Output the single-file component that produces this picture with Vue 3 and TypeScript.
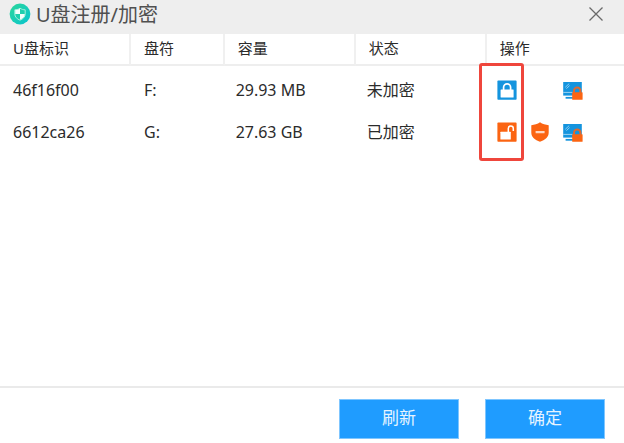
<script setup lang="ts">
import { ref } from 'vue'

interface Drive {
  id: string
  letter: string
  capacity: string
  encrypted: boolean
}

const columns: string[] = ['U盘标识', '盘符', '容量', '状态', '操作']
const drives = ref<Drive[]>([
  { id: '46f16f00', letter: 'F:', capacity: '29.93 MB', encrypted: false },
  { id: '6612ca26', letter: 'G:', capacity: '27.63 GB', encrypted: true },
])
</script>

<template>
  <main class="window">
    <header class="titlebar">
      <svg class="logo" viewBox="0 0 22 22" aria-hidden="true">
        <defs>
          <linearGradient id="logo-fill" x1="0" y1="0" x2="1" y2="1">
            <stop offset="0" stop-color="#2cd79a" />
            <stop offset="1" stop-color="#08c4d0" />
          </linearGradient>
        </defs>
        <circle cx="11" cy="11" r="10.4" fill="url(#logo-fill)" />
        <path d="M11 5.2 C12.6 6.3 14.3 6.8 16.2 6.8 V11 C16.2 13.9 14 16 11 17.2 C8 16 5.8 13.9 5.8 11 V6.8 C7.7 6.8 9.4 6.3 11 5.2 Z" fill="#1fcfae" stroke="#a5f0dd" stroke-width="1" />
        <path d="M11 5.6 V11 H6.2 V7.1 C8 7 9.6 6.6 11 5.6 Z M11 11 H15.8 C15.8 13.7 13.8 15.6 11 16.8 Z" fill="#f4fffc" />
      </svg>
      <h1 class="title">U盘注册/加密</h1>
      <button class="close" type="button" aria-label="关闭">
        <svg viewBox="0 0 14 14" aria-hidden="true">
          <path d="M0.5 0.5 L13.5 13.5 M13.5 0.5 L0.5 13.5" fill="none" stroke="#6a6a6a" stroke-width="1.3" />
        </svg>
      </button>
    </header>

    <section class="content">
      <table class="drives">
        <thead>
          <tr>
            <th v-for="name in columns" :key="name" scope="col">{{ name }}</th>
          </tr>
        </thead>
        <tbody>
          <tr v-for="(drive, index) in drives" :key="drive.id">
            <td>{{ drive.id }}</td>
            <td>{{ drive.letter }}</td>
            <td>{{ drive.capacity }}</td>
            <td>{{ drive.encrypted ? '已加密' : '未加密' }}</td>
            <td>
              <div class="actions">
                <span v-if="index === 0" class="highlight"></span>
                <button v-if="drive.encrypted" class="action" type="button" aria-label="解密">
                  <svg viewBox="0 0 20 20" aria-hidden="true">
                    <rect x="0.4" y="0.6" width="19.2" height="19.2" rx="0.8" fill="#fb6412" />
                    <rect x="3.4" y="9.8" width="10.4" height="7.8" rx="0.5" fill="#fff" />
                    <path d="M11.3 10 V6.4 A2.5 2.5 0 0 1 16.3 6.4 V9" fill="none" stroke="#fff" stroke-width="1.5" />
                  </svg>
                </button>
                <button v-else class="action" type="button" aria-label="加密">
                  <svg viewBox="0 0 20 20" aria-hidden="true">
                    <rect x="0.4" y="0.6" width="19.2" height="19.2" rx="0.8" fill="#1494de" />
                    <rect x="3.6" y="9.6" width="13" height="8" rx="0.5" fill="#fff" />
                    <path d="M6.6 10 V7.3 A3.5 3.5 0 0 1 13.6 7.3 V10" fill="none" stroke="#fff" stroke-width="1.7" />
                  </svg>
                </button>
                <button v-if="drive.encrypted" class="action shield" type="button" aria-label="取消保护">
                  <svg viewBox="0 0 20 20" aria-hidden="true">
                    <path d="M10 0.3 C12.5 2 15.6 2.9 18.7 3.2 V10.5 C18.7 15.2 15 18 10 19.8 C5 18 1.3 15.2 1.3 10.5 V3.2 C4.4 2.9 7.5 2 10 0.3 Z" fill="#fb6412" />
                    <rect x="5.6" y="9.1" width="9" height="2.2" rx="0.4" fill="#ffd6c0" />
                  </svg>
                </button>
                <button class="action computer" type="button" aria-label="本机锁定">
                  <svg viewBox="0 0 20 20" aria-hidden="true">
                    <rect x="0.2" y="2" width="18.6" height="13.6" fill="#1494de" />
                    <path d="M0.2 12.4 H9.6" stroke="#a9d9f4" stroke-width="0.9" />
                    <path d="M2.3 7.3 L6.2 3.6 M3.4 8.6 L6.6 5.6" stroke="#9bd4f3" stroke-width="0.9" />
                    <path d="M2.6 17.8 H10" stroke="#1494de" stroke-width="1.8" />
                    <path d="M11 12.8 V10.8 A3.2 3.2 0 0 1 17.4 10.8 V12.8" fill="none" stroke="#e0692f" stroke-width="2" />
                    <rect x="9.2" y="12.2" width="10.4" height="7.6" rx="0.6" fill="#fb6412" />
                  </svg>
                </button>
              </div>
            </td>
          </tr>
        </tbody>
      </table>
    </section>

    <footer class="footer">
      <button class="primary" type="button">刷新</button>
      <button class="primary" type="button">确定</button>
    </footer>
  </main>
</template>

<style>
body {
  background: #fff;
}
</style>

<style scoped>
.window {
  display: flex;
  flex-direction: column;
  min-height: 100vh;
  background: #fff;
  color: #2b2b2b;
  font-family: "Noto Sans", "Noto Sans CJK SC", sans-serif;
  font-size: 16px;
}

button {
  border: 0;
  padding: 0;
  font: inherit;
  background: none;
  cursor: pointer;
}

svg {
  display: block;
  width: 100%;
  height: 100%;
}

.titlebar {
  display: flex;
  align-items: center;
  height: 34px;
  padding: 0 21px 6px 9px;
  box-sizing: border-box;
  background: #eee;
}

.logo {
  flex: none;
  width: 22px;
  height: 22px;
}

.title {
  flex: 1;
  margin: 0 0 0 5px;
  padding-top: 2px;
  color: #505050;
  font-size: 20px;
  font-weight: 400;
  line-height: 26px;
}

.close {
  width: 14px;
  height: 14px;
}

.content {
  flex: 1;
}

.drives {
  width: 100%;
  table-layout: fixed;
  border-collapse: separate;
  border-spacing: 0;
}

th,
td {
  box-sizing: border-box;
  text-align: left;
  white-space: nowrap;
}

th {
  height: 32px;
  padding: 0 0 2px 13px;
  border-right: 2px solid #f0f0f0;
  border-bottom: 2px solid #eee;
  font-size: 15px;
  font-weight: 400;
  line-height: 24px;
}

th:last-child {
  border-right: 0;
}

th:nth-child(1) {
  width: 21%;
}

th:nth-child(2) {
  width: 15%;
}

th:nth-child(3),
th:nth-child(4) {
  width: 21%;
}

tbody::before {
  content: "";
  display: table-row;
  height: 3px;
}

td {
  height: 42px;
  padding: 0 0 0 13px;
  line-height: 24px;
}

td:nth-child(3),
td:nth-child(4) {
  padding-left: 11px;
}

td:last-child {
  padding-left: 10px;
}

.actions {
  position: relative;
  display: grid;
  grid-template-columns: repeat(3, 20px);
  column-gap: 13px;
}

.action {
  width: 20px;
  height: 20px;
}

.action:first-of-type {
  grid-column: 1;
}

.shield {
  grid-column: 2;
}

.computer {
  grid-column: 3;
}

.highlight {
  position: absolute;
  top: -17px;
  left: -18px;
  width: 45px;
  height: 98px;
  box-sizing: border-box;
  border: 3px solid #ef463c;
  border-radius: 3px;
  pointer-events: none;
}

.footer {
  display: flex;
  justify-content: flex-end;
  gap: 26px;
  padding: 11px 19px 4px;
  border-top: 2px solid #eaeaea;
}

.primary {
  width: 120px;
  height: 40px;
  border: 1px solid #7fc6ff;
  background: #1f9cff;
  color: #e6f4ff;
  font-size: 17px;
  line-height: 24px;
  padding-bottom: 2px;
}
</style>
